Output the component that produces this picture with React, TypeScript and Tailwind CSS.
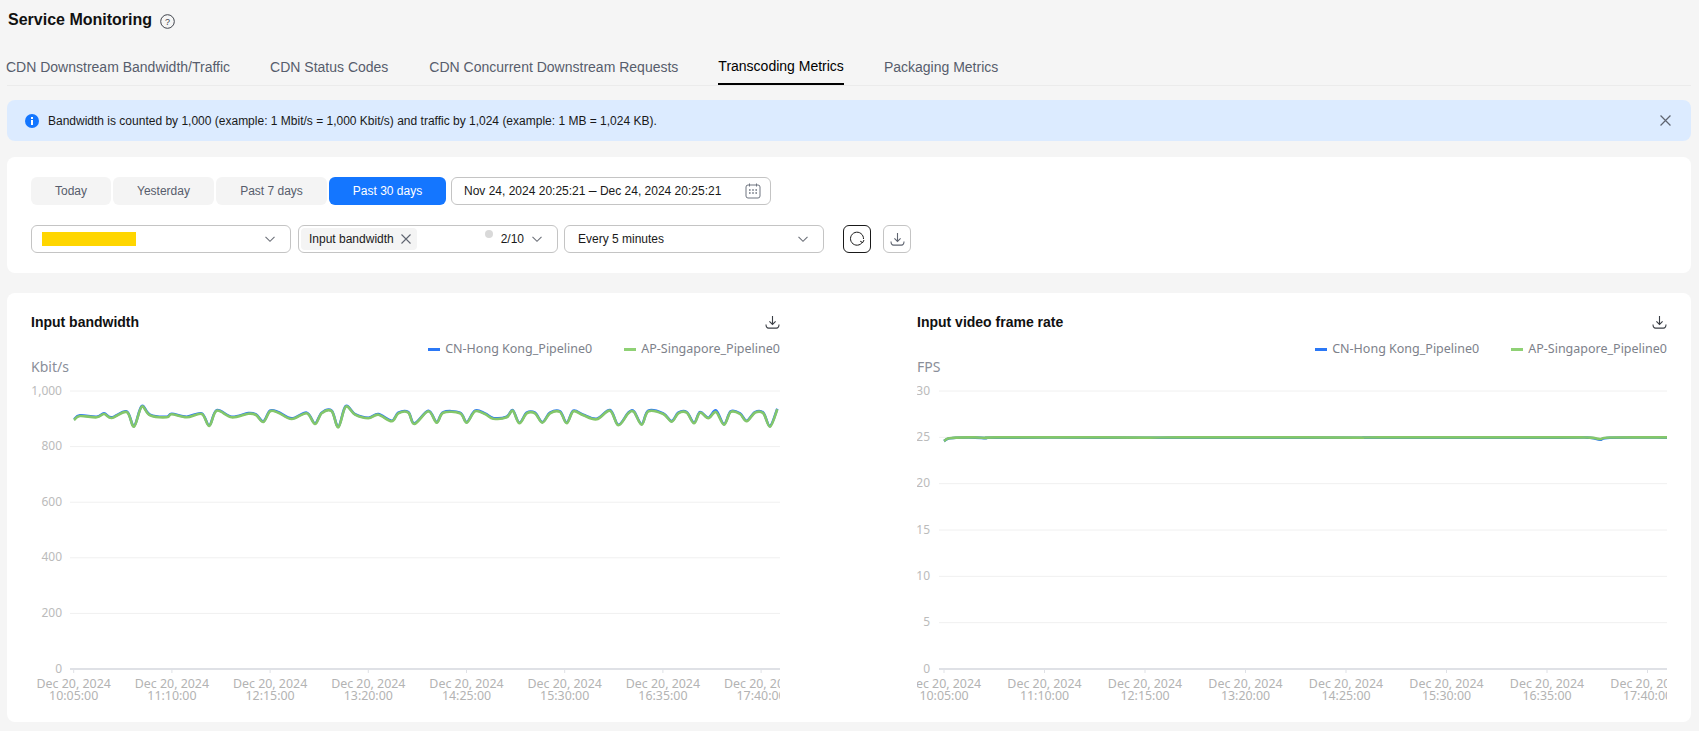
import React from "react";

const UI = "font-['Liberation_Sans',Arial,sans-serif]";
const CHART_FONT = "'Noto Sans','Noto Sans CJK SC',sans-serif";

type P = [number, number];

const z4: P[] = [[222,420],[240,408],[290,412],[312,402],[335,414],[380,396],[402,440],[425,380],[450,406],[500,412],[515,403],[560,412],[605,402],[628,438],[650,392],[695,412],[745,401],[768,405],[790,426],[810,394],[835,398],[875,417],[920,400],[945,432],[965,400],[995,394],[1015,442],[1037,380],[1065,404],[1105,415]];
const z5: P[] = [[25,404],[65,424],[85,400],[115,398],[133,432],[175,394],[200,428],[220,398],[270,400],[290,428],[315,394],[345,402],[370,416],[410,412],[428,392],[448,430],[470,400],[495,400],[517,428],[540,400],[570,396],[590,430],[610,394],[640,406],[680,418],[720,392],[745,436],[775,400],[792,396],[815,434],[835,394],[880,402],[905,425],[925,400],[950,398],[972,430]];
const z10: P[] = [[0,68],[25,85],[48,66],[72,104],[92,66],[120,72],[140,94],[165,68],[190,70],[210,110],[232,58]];

const bandwidth: P[] = [
  ...z4.map(([x, y]): P => [x / 3, 280 + y / 3]),
  ...z5.map(([x, y]): P => [370 + x / 3, 280 + y / 3]),
  ...z10.map(([x, y]): P => [700 + x / 3, 390 + y / 3]),
];

const fps: P[] = [[944,441],[948,438.5],[956,437.6],[975,437.4],[986,437.9],[996,437.4],[1100,437.4],[1150,437.6],[1180,437.4],[1300,437.4],[1360,437.6],[1380,437.4],[1560,437.4],[1590,437.6],[1600,439],[1610,437.5],[1667,437.4]];

function smooth(pts: P[]): string {
  let d = `M${pts[0][0].toFixed(1)} ${pts[0][1].toFixed(1)}`;
  for (let i = 0; i < pts.length - 1; i++) {
    const p0 = pts[Math.max(0, i - 1)];
    const p1 = pts[i];
    const p2 = pts[i + 1];
    const p3 = pts[Math.min(pts.length - 1, i + 2)];
    const c1x = p1[0] + (p2[0] - p0[0]) / 6;
    const c1y = p1[1] + (p2[1] - p0[1]) / 6;
    const c2x = p2[0] - (p3[0] - p1[0]) / 6;
    const c2y = p2[1] - (p3[1] - p1[1]) / 6;
    d += ` C${c1x.toFixed(1)} ${c1y.toFixed(1)} ${c2x.toFixed(1)} ${c2y.toFixed(1)} ${p2[0].toFixed(1)} ${p2[1].toFixed(1)}`;
  }
  return d;
}

const Chevron = () => (
  <svg width="10" height="10" viewBox="0 0 10 10" fill="none" stroke="#6b6f78" strokeWidth="1.1" className="shrink-0">
    <path d="M.5 2.8 5 7.3 9.500 2.800" />
  </svg>
);

const Cross = ({ size = 10, color = "#5f6470" }: { size?: number; color?: string }) => (
  <svg width={size} height={size} viewBox="0 0 10 10" fill="none" stroke={color} strokeWidth="1.1" className="shrink-0">
    <path d="M.5.5 9.5 9.500M9.500.5.5 9.500" />
  </svg>
);

const Download = ({ color = "#3b3f46" }: { color?: string }) => (
  <svg width="15" height="15" viewBox="0 0 15 15" fill="none" stroke={color} strokeWidth="1.1" className="shrink-0">
    <path d="M7.5 1v8.200M4.400 6.400 7.500 9.500l3.100-3.100" />
    <path d="M1 9.500c0 2.300.8 3.600 2.600 3.600h7.800c1.800 0 2.600-1.300 2.600-3.600" />
  </svg>
);

function Tab({ label, active }: { label: string; active?: boolean }) {
  return (
    <div className={`relative flex h-full items-center pt-[6px] text-sm ${active ? "text-[#000000] border-b-2 border-[#000000]" : "text-[#575d6c]"}`}>
      {label}
    </div>
  );
}

function RangeButton({ label, w, active }: { label: string; w: string; active?: boolean }) {
  return (
    <div className={`flex h-7 items-center justify-center rounded-md text-xs ${w} ${active ? "bg-[#1476ff] text-white" : "bg-[#f4f4f4] text-[#575d6c]"}`}>
      {label}
    </div>
  );
}

function LegendItem({ color, label }: { color: string; label: string }) {
  return (
    <div className="flex items-center gap-[5px] text-[12.5px] text-[#7d818a] font-['Noto_Sans','Noto_Sans_CJK_SC',sans-serif]">
      <span className={`h-[3px] w-3 shrink-0 ${color}`} />
      <span className="whitespace-nowrap">{label}</span>
    </div>
  );
}

interface ChartProps {
  title: string;
  unit: string;
  x0: number;
  x1: number;
  gridStart: number;
  yLabels: string[];
  firstTick: number;
  tickStep: number;
  times: string[];
  green: P[];
  blue: P[];
}

function Chart({ title, unit, x0, x1, gridStart, yLabels, firstTick, tickStep, times, green, blue }: ChartProps) {
  const top = 391;
  const bottom = 669;
  const w = x1 - x0;
  const n = yLabels.length - 1;
  return (
    <div className="flex flex-col" style={{ width: w }}>
      <div className="flex h-5 items-center justify-between">
        <div className="text-sm font-bold text-[#111111]">{title}</div>
        <Download />
      </div>
      <div className="mt-[7px] flex h-5 items-center justify-end gap-[32px]">
        <LegendItem color="bg-[#2b78f6]" label="CN-Hong Kong_Pipeline0" />
        <LegendItem color="bg-[#8fd175]" label="AP-Singapore_Pipeline0" />
      </div>
      <svg width={w} height={350} viewBox={`${x0} 359 ${w} 350`} className="block" style={{ fontFamily: CHART_FONT }}>
        <text x={x0} y={372} fontSize="14" fill="#8a8e99">{unit}</text>
        {yLabels.map((l, i) => {
          const y = top + ((bottom - top) * i) / n;
          return (
            <g key={l}>
              {i < n && <line x1={gridStart} x2={x1} y1={y} y2={y} stroke="#f0f0f0" strokeWidth="1" />}
              <text x={x0 === 31 ? 62 : x0 + 13} y={y + 3.500} fontSize="12" textAnchor="end" fill="#bbbbbb">{l}</text>
            </g>
          );
        })}
        <line x1={gridStart} x2={x1} y1={bottom} y2={bottom} stroke="#dfe1e6" strokeWidth="2" />
        {times.map((t, i) => {
          const x = firstTick + i * tickStep;
          return (
            <g key={t}>
              <line x1={x} x2={x} y1={bottom} y2={bottom + 4} stroke="#dfe1e6" strokeWidth="1" />
              <text x={x} y={687.5} fontSize="12.4" textAnchor="middle" fill="#b3b3b3">Dec 20, 2024</text>
              <text x={x} y={699.5} fontSize="12.4" textAnchor="middle" fill="#b3b3b3">{t}</text>
            </g>
          );
        })}
        <path d={smooth(blue)} fill="none" stroke="#2b78f6" strokeWidth="2.6" />
        <path d={smooth(green)} fill="none" stroke="#84c76a" strokeWidth="2.6" />
      </svg>
    </div>
  );
}

const times = ["10:05:00", "11:10:00", "12:15:00", "13:20:00", "14:25:00", "15:30:00", "16:35:00", "17:40:00"];

export default function App() {
  const blueBw: P[] = bandwidth.map(([x, y]): P => [x, y - (Math.abs(x - 716) < 4 ? 1.6 : 0.6)]);
  const blueFps: P[] = fps.map(([x, y]): P => [x, y + (x === 1600 ? 0.8 : 0.2)]);
  return (
    <div className={`h-[731px] w-full overflow-hidden bg-[#f5f5f5] pl-[7px] pr-[8px] ${UI}`}>
      <div className="flex h-10 items-center pl-px">
        <span className="text-base font-bold text-[#111111]">Service Monitoring</span>
        <svg width="15" height="15" viewBox="0 0 15 15" fill="none" className="ml-2 mt-[3px]">
          <circle cx="7.500" cy="7.500" r="6.800" stroke="#3f434b" strokeWidth="1" />
          <text x="7.500" y="10.600" textAnchor="middle" fontSize="9" fill="#3f434b" fontFamily="Liberation Sans">?</text>
        </svg>
      </div>

      <div className="mt-[2px] flex h-[44px] gap-10 border-b border-[#ebebeb]">
        <div className="-ml-px flex h-full gap-10">
          <Tab label="CDN Downstream Bandwidth/Traffic" />
          <Tab label="CDN Status Codes" />
        </div>
        <div className="ml-px flex h-full gap-10">
          <Tab label="CDN Concurrent Downstream Requests" />
          <Tab label="Transcoding Metrics" active />
          <Tab label="Packaging Metrics" />
        </div>
      </div>

      <div className="mt-[14px] flex h-[41px] items-center rounded-lg bg-[#dcebff] pl-[18px] pr-5">
        <svg width="14" height="14" viewBox="0 0 14 14" className="shrink-0">
          <circle cx="7" cy="7" r="7" fill="#1476ff" />
          <rect x="6" y="6" width="2" height="5" fill="#fff" />
          <rect x="6" y="3" width="2" height="2" fill="#fff" />
        </svg>
        <span className="ml-[9px] text-xs text-[#191919]">
          Bandwidth is counted by 1,000 (example: 1 Mbit/s = 1,000 Kbit/s) and traffic by 1,024 (example: 1 MB = 1,024 KB).
        </span>
        <span className="ml-auto"><Cross size={11} /></span>
      </div>

      <div className="mt-4 h-[116px] rounded-lg bg-white pl-6 pt-5">
        <div className="flex gap-[2px]">
          <RangeButton label="Today" w="w-20" />
          <RangeButton label="Yesterday" w="w-[101px]" />
          <RangeButton label="Past 7 days" w="w-[111px]" />
          <RangeButton label="Past 30 days" w="w-[117px]" active />
          <div className="ml-[3px] flex h-7 w-80 items-center justify-between rounded-md border border-[#c4c4c4] pl-[13px] pr-[9px] text-xs text-[#191919]">
            <span className="-ml-px">Nov 24, 2024 20:25:21 <span className="text-sm leading-none">–</span> Dec 24, 2024 20:25:21</span>
            <svg width="16" height="16" viewBox="0 0 16 16" fill="none" stroke="#6f7580" strokeWidth="1">
              <rect x="1" y="2" width="14" height="13" rx="2" />
              <path d="M4.500 .5v3M11.500 .5v3" />
              <path d="M4 7h1.600M7.200 7h1.600M10.400 7H12M4 10h1.600M7.200 10h1.600M10.400 10H12" strokeWidth="1.400" />
            </svg>
          </div>
        </div>
        <div className="mt-5 flex h-7">
          <div className="flex w-[260px] items-center justify-between rounded-md border border-[#c4c4c4] pl-[10px] pr-[15px]">
            <div className="h-[14px] w-[94px] bg-[#ffd600]" />
            <Chevron />
          </div>
          <div className="ml-[7px] flex w-[260px] items-center rounded-md border border-[#c4c4c4] pl-[2px] pr-[15px]">
            <div className="flex h-[22px] w-[116px] items-center gap-[7px] rounded bg-[#f4f4f4] pl-2 text-xs text-[#191919]">
              Input bandwidth
              <Cross size={10} />
            </div>
            <span className="ml-auto mb-[10px] h-2 w-2 rounded-full bg-[#d9d9d9]" />
            <span className="ml-[8px] text-xs text-[#191919]">2/10</span>
            <span className="ml-[8px]"><Chevron /></span>
          </div>
          <div className="ml-[6px] flex w-[260px] items-center justify-between rounded-md border border-[#c4c4c4] pl-[13px] pr-[15px] text-xs text-[#191919]">
            Every 5 minutes
            <Chevron />
          </div>
          <div className="ml-[19px] flex h-7 w-7 items-center justify-center rounded-md border border-[#191919]">
            <svg width="16" height="16" viewBox="0 0 16 16" fill="none" stroke="#191919" strokeWidth="1">
              <path d="M13.600 11A6.500 6.500 0 1 1 14.500 8" />
              <path d="M11.200 10.200 13.700 11.600 15 9" />
            </svg>
          </div>
          <div className="ml-3 flex h-7 w-7 items-center justify-center rounded-md border border-[#c4c4c4]">
            <Download color="#5f6470" />
          </div>
        </div>
      </div>

      <div className="mt-5 flex h-[429px] justify-between rounded-lg bg-white pl-6 pr-6 pt-[19px]">
        <Chart
          title="Input bandwidth"
          unit="Kbit/s"
          x0={31}
          x1={780}
          gridStart={70}
          yLabels={["1,000", "800", "600", "400", "200", "0"]}
          firstTick={73.7}
          tickStep={98.2}
          times={times}
          green={bandwidth}
          blue={blueBw}
        />
        <Chart
          title="Input video frame rate"
          unit="FPS"
          x0={917}
          x1={1667}
          gridStart={939}
          yLabels={["30", "25", "20", "15", "10", "5", "0"]}
          firstTick={944}
          tickStep={100.5}
          times={times}
          green={fps}
          blue={blueFps}
        />
      </div>
    </div>
  );
}
